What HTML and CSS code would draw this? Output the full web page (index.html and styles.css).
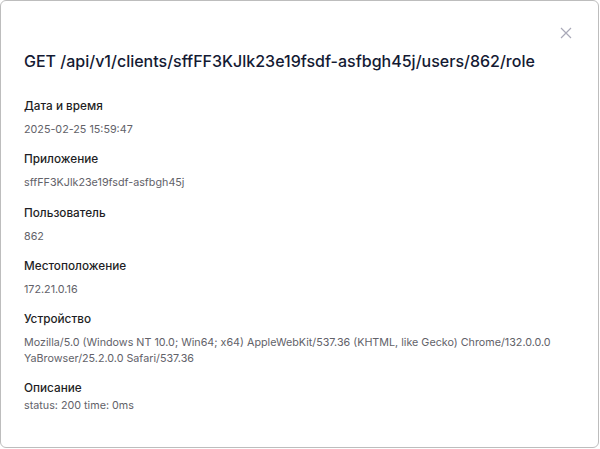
FILE: index.html
```html
<!DOCTYPE html>
<html lang="ru">
<head>
<meta charset="utf-8">
<link rel="stylesheet" href="styles.css">
</head>
<body>
<div class="modal">
  <button class="close" aria-label="Закрыть">
    <svg width="12" height="12" viewBox="0 0 12 12"><path d="M1 1L11 11M11 1L1 11" stroke="#a9a9b8" stroke-width="1.2" fill="none"/></svg>
  </button>
  <h1 class="title">GET /api/v1/clients/sffFF3KJlk23e19fsdf-asfbgh45j/users/862/role</h1>
  <div class="field">
    <div class="label">Дата и время</div>
    <div class="value">2025-02-25 15:59:47</div>
  </div>
  <div class="field">
    <div class="label">Приложение</div>
    <div class="value">sffFF3KJlk23e19fsdf-asfbgh45j</div>
  </div>
  <div class="field">
    <div class="label">Пользователь</div>
    <div class="value">862</div>
  </div>
  <div class="field">
    <div class="label">Местоположение</div>
    <div class="value">172.21.0.16</div>
  </div>
  <div class="field">
    <div class="label">Устройство</div>
    <div class="value">Mozilla/5.0 (Windows NT 10.0; Win64; x64) AppleWebKit/537.36 (KHTML, like Gecko) Chrome/132.0.0.0 YaBrowser/25.2.0.0 Safari/537.36</div>
  </div>
  <div class="field tight">
    <div class="label">Описание</div>
    <div class="value">status: 200 time: 0ms</div>
  </div>
</div>
</body>
</html>
```
FILE: styles.css
```css
html, body {
  margin: 0;
  padding: 0;
  background: #fff;
}
body {
  font-family: Inter, "Noto Sans", sans-serif;
}
.modal {
  position: relative;
  box-sizing: border-box;
  width: 599px;
  height: 448px;
  border: 1px solid #bdbdbd;
  border-radius: 6px;
  padding: 48px 23px 0 23px;
  background: #fff;
}
.close {
  position: absolute;
  top: 25px;
  left: 558px;
  width: 14px;
  height: 14px;
  padding: 0;
  border: 0;
  background: none;
  display: flex;
  align-items: center;
  justify-content: center;
}
.title {
  margin: 0 0 25px;
  font-size: 16px;
  line-height: 24px;
  font-weight: 500;
  color: #141a33;
}
.field {
  display: flex;
  flex-direction: column;
  gap: 8px;
  margin-bottom: 13.25px;
}
.field.tight {
  gap: 2px;
}
.label {
  font-size: 11.75px;
  line-height: 16px;
  font-weight: 500;
  color: #1e1e24;
}
.value {
  font-size: 10.75px;
  line-height: 16px;
  color: #626269;
}
```
